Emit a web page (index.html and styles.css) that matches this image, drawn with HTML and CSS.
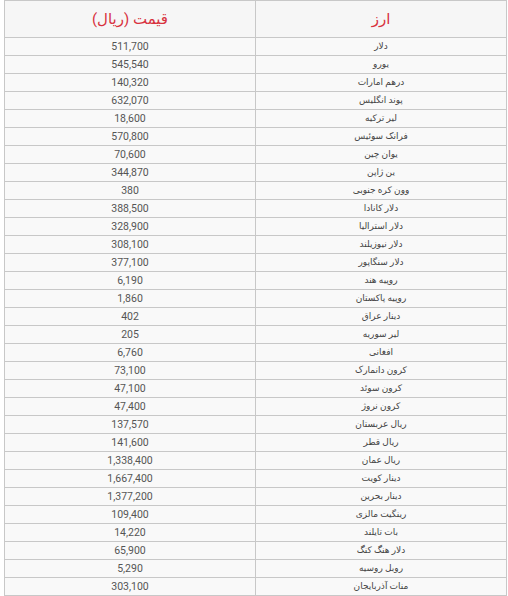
FILE: index.html
```html
<!DOCTYPE html>
<html lang="fa" dir="rtl">
<head>
<meta charset="utf-8">
<link rel="stylesheet" href="styles.css">
</head>
<body>
<table class="rates">
<thead>
<tr><th>ارز</th><th>قیمت (ریال)</th></tr>
</thead>
<tbody>
<tr><td>دلار</td><td>511,700</td></tr>
<tr><td>یورو</td><td>545,540</td></tr>
<tr><td>درهم امارات</td><td>140,320</td></tr>
<tr><td>پوند انگلیس</td><td>632,070</td></tr>
<tr><td>لیر ترکیه</td><td>18,600</td></tr>
<tr><td>فرانک سوئیس</td><td>570,800</td></tr>
<tr><td>یوان چین</td><td>70,600</td></tr>
<tr><td>ین ژاپن</td><td>344,870</td></tr>
<tr><td>وون کره جنوبی</td><td>380</td></tr>
<tr><td>دلار کانادا</td><td>388,500</td></tr>
<tr><td>دلار استرالیا</td><td>328,900</td></tr>
<tr><td>دلار نیوزیلند</td><td>308,100</td></tr>
<tr><td>دلار سنگاپور</td><td>377,100</td></tr>
<tr><td>روپیه هند</td><td>6,190</td></tr>
<tr><td>روپیه پاکستان</td><td>1,860</td></tr>
<tr><td>دینار عراق</td><td>402</td></tr>
<tr><td>لیر سوریه</td><td>205</td></tr>
<tr><td>افغانی</td><td>6,760</td></tr>
<tr><td>کرون دانمارک</td><td>73,100</td></tr>
<tr><td>کرون سوئد</td><td>47,100</td></tr>
<tr><td>کرون نروژ</td><td>47,400</td></tr>
<tr><td>ریال عربستان</td><td>137,570</td></tr>
<tr><td>ریال قطر</td><td>141,600</td></tr>
<tr><td>ریال عمان</td><td>1,338,400</td></tr>
<tr><td>دینار کویت</td><td>1,667,400</td></tr>
<tr><td>دینار بحرین</td><td>1,377,200</td></tr>
<tr><td>رینگیت مالزی</td><td>109,400</td></tr>
<tr><td>بات تایلند</td><td>14,220</td></tr>
<tr><td>دلار هنگ کنگ</td><td>65,900</td></tr>
<tr><td>روبل روسیه</td><td>5,290</td></tr>
<tr><td>منات آذربایجان</td><td>303,100</td></tr>
</tbody>
</table>
</body>
</html>
```

FILE: styles.css
```css
html, body {
  margin: 0;
  padding: 0;
  background: #ffffff;
}
body {
  padding-left: 4px;
  padding-right: 1px;
  font-family: Roboto, "DejaVu Sans", sans-serif;
}
.rates {
  width: 503px;
  border-collapse: collapse;
  table-layout: fixed;
  background: #f9f9f9;
}
.rates th,
.rates td {
  border: 1px solid #c8c8c8;
  text-align: center;
  padding: 0;
  width: 50%;
}
.rates th {
  height: 36px;
  font-size: 15px;
  font-weight: normal;
  color: #d8323e;
  background: #f6f6f6;
}
.rates td {
  height: 17px;
  font-size: 10.5px;
  color: #555555;
  line-height: 17px;
}
.rates td:first-child {
  font-size: 9px;
  color: #444444;
}
```
